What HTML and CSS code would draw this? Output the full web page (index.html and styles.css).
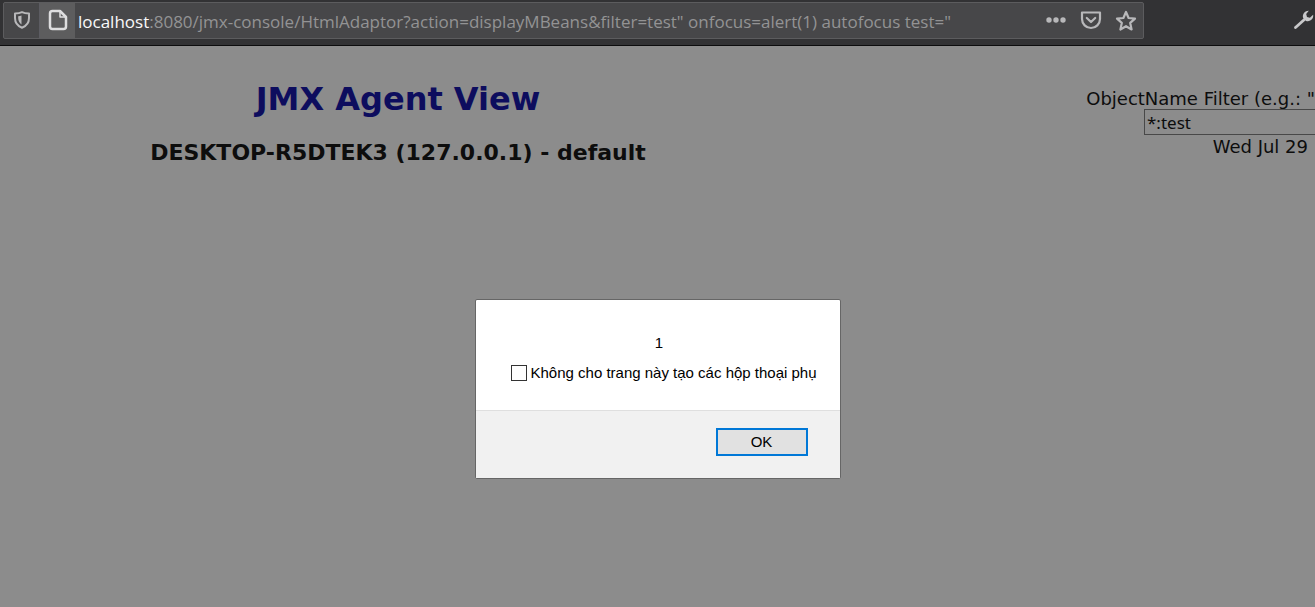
FILE: index.html
```html
<!DOCTYPE html>
<html lang="en">
<head>
<meta charset="utf-8">
<title>JMX Agent View</title>
<link rel="stylesheet" href="styles.css">
</head>
<body>
<header class="toolbar">
  <div class="urlbar">
    <button class="icon-btn shield" aria-label="Tracking protection">
      <svg width="18" height="20" viewBox="0 0 18 20" fill="none"><path d="M9 1.200C7 2.200 4.500 2.500 2 2.500V7c0 4.500 2.600 8 7 9.800c4.400-1.800 7-5.300 7-9.800V2.500c-2.500 0-5-.3-7-1.300z" stroke="#b8b8ba" stroke-width="2" stroke-linejoin="round"/><path d="M8.500 4.500v9C6.500 12 5.200 10 5.200 7V5.200c1.200 0 2.300-.2 3.300-.7z" fill="#b8b8ba"/></svg>
    </button>
    <button class="icon-btn site" aria-label="Site information">
      <svg width="20" height="24" viewBox="0 0 20 24" fill="none" stroke="#dededf" stroke-width="2.500" stroke-linejoin="round"><path d="M4.500 2H12l6 6v9.500a2.500 2.500 0 0 1-2.500 2.500h-11A2.500 2.500 0 0 1 2 17.500v-13A2.500 2.500 0 0 1 4.500 2z"/><path d="M12 2.500V8h5.500" stroke-width="1.500"/></svg>
    </button>
    <div class="address" role="textbox" aria-label="Address" contenteditable="true" spellcheck="false"><span class="host">localhost</span>:8080/jmx-console/HtmlAdaptor?action=displayMBeans&amp;filter=test" onfocus=alert(1) autofocus test="</div>
    <div class="actions">
      <button class="action" aria-label="Page actions"><svg width="22" height="22" viewBox="0 0 22 22" fill="#b8b8ba"><circle cx="4" cy="10" r="2.700"/><circle cx="11" cy="10" r="2.700"/><circle cx="18" cy="10" r="2.700"/></svg></button>
      <button class="action" aria-label="Save to Pocket"><svg width="22" height="22" viewBox="0 0 22 22" fill="none" stroke="#b8b8ba" stroke-width="2.200" stroke-linecap="round" stroke-linejoin="round"><path d="M2 2.500h18v6.500a9 9 0 0 1-18 0z"/><path d="M6.800 8L11 12l4.200-4"/></svg></button>
      <button class="action" aria-label="Bookmark"><svg width="22" height="22" viewBox="0 0 22 22" fill="none" stroke="#b8b8ba" stroke-width="2.200" stroke-linejoin="round"><path d="M11 2l2.600 6 6.400.6-4.800 4.300 1.400 6.600L11 16.200l-5.600 3.300 1.400-6.600L2 8.600 8.400 8z"/></svg></button>
    </div>
  </div>
  <button class="wrench" aria-label="Developer tools"><svg width="22" height="22" viewBox="0 0 22 22"><path d="M2.500 17.500L12 9" stroke="#c8c8ca" stroke-width="2.800" stroke-linecap="round"/><path d="M15.800.8a5.400 5.400 0 0 0-5.600 7.300l2.900 2.800a5.400 5.400 0 0 0 7-6.200l-3.200 3.100-2.900-.8-.8-2.900z" fill="#c8c8ca"/></svg></button>
</header>
<main class="page">
  <section class="heading">
    <h1 class="title">JMX Agent View</h1>
    <h2 class="server">DESKTOP-R5DTEK3 (127.0.0.1) - default</h2>
  </section>
  <form class="filter">
    <label class="filter-label" for="filter">ObjectName Filter (e.g.: "</label>
    <input class="filter-input" id="filter" type="text" value="*:test">
    <span class="date">Wed Jul 29</span>
  </form>
  <div class="dialog" role="alertdialog" aria-modal="true" aria-labelledby="message">
    <div class="dialog-body">
      <p class="message" id="message">1</p>
      <label class="suppress"><input class="check" type="checkbox"><span lang="vi">Không cho trang này tạo các hộp thoại phụ</span></label>
    </div>
    <div class="dialog-footer"><button class="ok">OK</button></div>
  </div>
</main>
</body>
</html>
```
FILE: styles.css
```css
* { box-sizing: border-box; }
body {
  margin: 0;
  min-height: 100vh;
  display: flex;
  flex-direction: column;
  overflow: hidden;
  background: #8c8c8c;
  color: #0d0d0d;
  font-family: Verdana, "DejaVu Sans", sans-serif;
}
button { margin: 0; padding: 0; border: 0; background: none; font: inherit; }
svg { display: block; }
.toolbar {
  display: flex;
  align-items: center;
  justify-content: space-between;
  height: 46px;
  padding: 2px 0 6px 3px;
  background: #323234;
  border-bottom: 1px solid #0c0c0d;
}
.urlbar {
  flex: 0 1 1141px;
  min-width: 0;
  display: flex;
  height: 37px;
  border: 1px solid #5c5c5e;
  border-radius: 2px;
  background: #474749;
}
.icon-btn { display: grid; place-items: center; flex: none; width: 36px; }
.shield { border-right: 1px solid #5c5c62; }
.site { width: 35px; background: #5d5d5e; }
.address {
  flex: 1;
  min-width: 0;
  padding-left: 3px;
  overflow: hidden;
  white-space: nowrap;
  font: 17px/37px "Segoe UI", "Open Sans", sans-serif;
  color: #939394;
  outline: 0;
}
.host { color: #f9f9fa; }
.actions { display: flex; align-items: center; gap: 13px; padding-right: 6px; }
.page { position: relative; flex: 1; display: flex; justify-content: space-between; padding-top: 34px; }
.heading { flex: 0 0 796px; text-align: center; }
.title { margin: 0; font-size: 32px; line-height: 38px; color: #0d0d5e; }
.server { margin: 20px 0 0; font-size: 22px; line-height: 30px; }
.filter {
  flex: none;
  display: flex;
  flex-direction: column;
  align-items: flex-end;
  padding-top: 9px;
  font-size: 18px;
  line-height: 24px;
  white-space: nowrap;
}
.filter-label { line-height: 20px; }
.filter-input {
  width: 171px;
  height: 26px;
  padding: 0 2px;
  border: 1px solid #484848;
  border-right: 0;
  border-radius: 0;
  background: #8c8c8c;
  color: #0d0d0d;
  font: 17px "Segoe UI", "Noto Sans", sans-serif;
}
.date { padding-right: 7px; }
.dialog {
  position: absolute;
  top: 253px;
  left: 50%;
  width: 366px;
  margin-left: -183px;
  border: 1px solid #666;
  border-radius: 2px;
  background: #fff;
  color: #000;
  font: 15px/20px Arial, "Liberation Sans", sans-serif;
}
.dialog-body { padding: 33px 32px 27px 35px; }
.message { margin: 0 0 10px; text-align: center; }
.suppress { display: flex; align-items: center; gap: 4px; white-space: nowrap; }
.check { appearance: none; flex: none; width: 16px; height: 16px; margin: 0; border: 1px solid #333; background: #fff; }
.dialog-footer {
  display: flex;
  justify-content: flex-end;
  padding: 17px 32px 22px;
  border-top: 1px solid #dfdfdf;
  background: #f1f1f1;
}
.ok { width: 92px; height: 28px; border: 2px solid #0078d7; background: #e1e1e1; color: #000; }
```
